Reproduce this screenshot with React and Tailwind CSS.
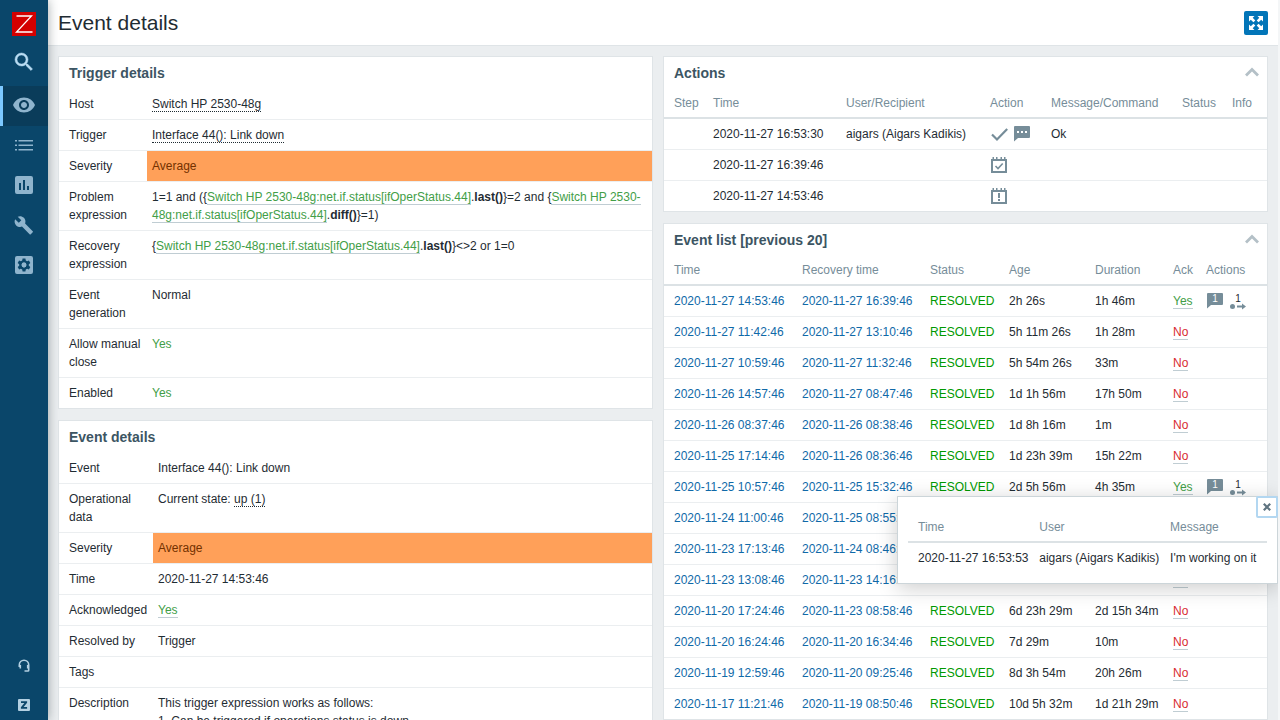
import { useState } from "react";

// =========================
// DATA
// =========================
const NAV_ITEMS = [
    { label: "Monitoring", icon: "eye", active: true },
    { label: "Inventory", icon: "list" },
    { label: "Reports", icon: "chart" },
    { label: "Configuration", icon: "wrench" },
    { label: "Administration", icon: "gear" },
];

const ACTIONS = [
    { time: "2020-11-27 16:53:30", user: "aigars (Aigars Kadikis)", icons: ["check", "comment"], message: "Ok" },
    { time: "2020-11-27 16:39:46", user: "", icons: ["calendarCheck"], message: "" },
    { time: "2020-11-27 14:53:46", user: "", icons: ["calendarAlert"], message: "" },
];

const EVENTS = [
    { time: "2020-11-27 14:53:46", recovery: "2020-11-27 16:39:46", age: "2h 26s", duration: "1h 46m", ack: true },
    { time: "2020-11-27 11:42:46", recovery: "2020-11-27 13:10:46", age: "5h 11m 26s", duration: "1h 28m" },
    { time: "2020-11-27 10:59:46", recovery: "2020-11-27 11:32:46", age: "5h 54m 26s", duration: "33m" },
    { time: "2020-11-26 14:57:46", recovery: "2020-11-27 08:47:46", age: "1d 1h 56m", duration: "17h 50m" },
    { time: "2020-11-26 08:37:46", recovery: "2020-11-26 08:38:46", age: "1d 8h 16m", duration: "1m" },
    { time: "2020-11-25 17:14:46", recovery: "2020-11-26 08:36:46", age: "1d 23h 39m", duration: "15h 22m" },
    { time: "2020-11-25 10:57:46", recovery: "2020-11-25 15:32:46", age: "2d 5h 56m", duration: "4h 35m", ack: true, popup: true },
    { time: "2020-11-24 11:00:46", recovery: "2020-11-25 08:55:46", age: "3d 5h 53m", duration: "21h 55m" },
    { time: "2020-11-23 17:13:46", recovery: "2020-11-24 08:46:46", age: "3d 23h 40m", duration: "15h 33m" },
    { time: "2020-11-23 13:08:46", recovery: "2020-11-23 14:16:46", age: "4d 3h 45m", duration: "1h 8m" },
    { time: "2020-11-20 17:24:46", recovery: "2020-11-23 08:58:46", age: "6d 23h 29m", duration: "2d 15h 34m" },
    { time: "2020-11-20 16:24:46", recovery: "2020-11-20 16:34:46", age: "7d 29m", duration: "10m" },
    { time: "2020-11-19 12:59:46", recovery: "2020-11-20 09:25:46", age: "8d 3h 54m", duration: "20h 26m" },
    { time: "2020-11-17 11:21:46", recovery: "2020-11-19 08:50:46", age: "10d 5h 32m", duration: "1d 21h 29m" },
];

// =========================
// ICONS
// =========================
function NavIcon({ name }) {
    return (
        <svg width="24" height="24" viewBox="0 0 24 24" fill="currentColor" aria-hidden="true">
            {name === "search" && (
                <path
                    d="M15.5 14h-.79l-.28-.27A6.471 6.471 0 0 0 16 9.5 6.5 6.5 0 1 0 9.5 16c1.61 0 3.09-.59 4.23-1.57l.27.28v.79l5 4.99L20.49 19l-4.99-5zm-6 0C7.01 14 5 11.99 5 9.5S7.01 5 9.5 5 14 7.01 14 9.5 11.99 14 9.5 14z"
                    stroke="currentColor"
                    strokeWidth=".5"
                />
            )}
            {name === "eye" && (
                <path d="M12 4.5C7 4.5 2.73 7.61 1 12c1.73 4.39 6 7.5 11 7.5s9.27-3.11 11-7.5c-1.73-4.39-6-7.5-11-7.5zM12 17c-2.76 0-5-2.24-5-5s2.24-5 5-5 5 2.24 5 5-2.24 5-5 5zm0-8c-1.66 0-3 1.34-3 3s1.34 3 3 3 3-1.34 3-3-1.34-3-3-3z" />
            )}
            {name === "list" && (
                <path d="M3 7h2v1.5H3zM6.500 7H21v1.5H6.500zM3 11.500h2V13H3zM6.500 11.500H21V13H6.500zM3 16h2v1.5H3zM6.500 16H21v1.5H6.500z" />
            )}
            {name === "chart" && (
                <path d="M19 3H5a2 2 0 0 0-2 2v14a2 2 0 0 0 2 2h14a2 2 0 0 0 2-2V5a2 2 0 0 0-2-2zM9 17H7v-7h2v7zm4 0h-2V7h2v10zm4 0h-2v-4h2v4z" />
            )}
            {name === "wrench" && (
                <path d="M20.7 18.2l-7.6-7.6c.8-1.9.3-4.2-1.2-5.8-1.7-1.7-4.2-2-6.2-1.100l3.600 3.500-2.500 2.500-3.700-3.500c-1 2.100-.5 4.600 1.100 6.200 1.600 1.500 3.900 2 5.800 1.200l7.600 7.600c.3.3.8.3 1.200 0l1.900-1.900c.4-.3.4-.9 0-1.100z" />
            )}
            {name === "gear" && (
                <>
                    <path
                        fillRule="evenodd"
                        d="M5 3h14a2 2 0 0 1 2 2v14a2 2 0 0 1-2 2H5a2 2 0 0 1-2-2V5a2 2 0 0 1 2-2zM10.600 5.500L10.200 7.400 8.900 8.200 7.100 7.500 5.700 10 7.200 11.200V12.800L5.700 14 7.100 16.500 8.900 15.800 10.200 16.600 10.600 18.500H13.400L13.800 16.600 15.100 15.800 16.900 16.500 18.300 14 16.800 12.800V11.200L18.300 10 16.900 7.500 15.100 8.200 13.800 7.400 13.400 5.500zM12 9.600a2.400 2.400 0 1 0 0 4.800 2.400 2.400 0 0 0 0-4.800z"
                        clipRule="evenodd"
                    />
                    <circle cx="12" cy="12" r="2.4" className="fill-[#8fb4cd]" />
                </>
            )}
            {name === "headset" && (
                <path
                    d="M7.300 14V12a4.700 4.700 0 0 1 9.400 0v5.200a.800.800 0 0 1-.800.800H12.500M8.300 12v3.500M15.700 12v3.500"
                    fill="none"
                    stroke="currentColor"
                    strokeWidth="1.6"
                />
            )}
            {name === "share" && (
                <path fillRule="evenodd" d="M7 6h10a1 1 0 0 1 1 1v10a1 1 0 0 1-1 1H7a1 1 0 0 1-1-1V7a1 1 0 0 1 1-1zm2 2.200v1.900h3.400L8.900 14.300v1.500h6.200v-1.900h-3.500l3.500-4.200V8.200z" />
            )}
        </svg>
    );
}

function ActionIcon({ name }) {
    return (
        <svg width="18" height="18" viewBox="0 0 18 18" fill="currentColor" aria-hidden="true">
            {name === "check" && (
                <path d="M2 9.500l5 5L17.200 4" fill="none" stroke="currentColor" strokeWidth="2.2" />
            )}
            {name === "comment" && (
                <path fillRule="evenodd" d="M2 1h14a1 1 0 0 1 1 1v10a1 1 0 0 1-1 1H5l-4 3.500V2a1 1 0 0 1 1-1zm2 5v2h2V6zm4 0v2h2V6zm4 0v2h2V6z" />
            )}
            {(name === "calendarCheck" || name === "calendarAlert") && (
                <path
                    fillRule="evenodd"
                    d="M1 3h1.500V1H4v2h2V1h1.500v2h3V1H12v2h2V1h1.500v2H17v14H1zm2 2v10h12V5z"
                />
            )}
            {name === "calendarCheck" && (
                <path d="M5.500 10l2.500 2.500L12.700 7.500" fill="none" stroke="currentColor" strokeWidth="1.6" />
            )}
            {name === "calendarAlert" && <path d="M8 6h2v5H8zM8 12h2v2H8z" />}
        </svg>
    );
}

function MessageCountIcon() {
    return (
        <svg width="18" height="18" viewBox="0 0 18 18" aria-hidden="true">
            <path d="M2 1h14a1 1 0 0 1 1 1v10a1 1 0 0 1-1 1H5l-4 3.500V2a1 1 0 0 1 1-1z" fill="#768d99" />
            <text x="9" y="10" textAnchor="middle" fontSize="10" fill="#fff">1</text>
        </svg>
    );
}

function ActionCountIcon() {
    return (
        <svg width="18" height="18" viewBox="0 0 18 18" aria-hidden="true">
            <text x="9" y="10" textAnchor="middle" fontSize="10" fill="#1f2c33">1</text>
            <circle cx="3.5" cy="14.5" r="2.5" fill="#768d99" />
            <path d="M8 13.500h5V11.500l4 3-4 3v-2H8z" fill="#768d99" />
        </svg>
    );
}

// =========================
// SHARED PIECES
// =========================
function Panel({ title, collapsible, children }) {
    return (
        <section className="bg-white border border-[#dfe4e7]">
            <div className="h-8 px-2.5 flex items-center justify-between">
                <h2 className="text-sm font-bold text-[#3c5563]">{title}</h2>
                {collapsible && (
                    <button aria-label={`Collapse ${title}`} className="w-3.5 h-5 -mr-0.5 mb-1 text-[#b4c0c7]">
                        <svg width="14" height="20" viewBox="0 0 14 20" fill="none" stroke="currentColor" strokeWidth="2.8">
                            <path d="M1 14.500l6-6 6 6" />
                        </svg>
                    </button>
                )}
            </div>
            {children}
        </section>
    );
}

function DetailRow({ label, severity, children }) {
    return (
        <tr className="border-b border-[#ebeef0] last:border-b-0">
            <th scope="row" className="py-1.5 pl-2.5 pr-0 text-left font-normal align-top">{label}</th>
            <td className={severity ? "py-1.5 px-[5px] align-top bg-[#ffa059] text-[#733100]" : "py-1.5 px-[5px] align-top"}>
                {children}
            </td>
        </tr>
    );
}

function ItemLink({ children }) {
    return <a href="#item" className="text-[#429e47] border-b border-[#c0cdd3]">{children}</a>;
}

function HintLink({ children }) {
    return <a href="#menu" className="border-b border-dotted border-[#1f2c33]">{children}</a>;
}

function Th({ children }) {
    return (
        <th scope="col" className="py-[5px] px-[5px] first:pl-2.5 last:pr-2.5 text-left font-normal text-[#768d99] whitespace-nowrap">
            {children}
        </th>
    );
}

function Td({ children }) {
    return <td className="py-1.5 px-[5px] first:pl-2.5 last:pr-2.5 whitespace-nowrap">{children}</td>;
}

// =========================
// SIDEBAR
// =========================
function Sidebar() {
    return (
        <aside className="w-12 shrink-0 z-20 flex flex-col bg-[#0a466a] text-[#8fb4cd] shadow-[0_0_10px_rgba(31,44,51,0.4)]">
            <a href="#home" aria-label="Zabbix" className="mt-3 mx-3 size-6 bg-[#d40000]">
                <svg width="24" height="24" viewBox="0 0 24 24" fill="none" stroke="#fff" strokeWidth="1.3">
                    <path d="M4.500 4H19.500L4.500 20H20.500" />
                </svg>
            </a>
            <button aria-label="Search" className="mt-1.5 mb-1 h-10 flex items-center justify-center text-[#b9dcf3]">
                <NavIcon name="search" />
            </button>
            <nav className="flex flex-col">
                {NAV_ITEMS.map((item) => (
                    <a
                        key={item.label}
                        href="#nav"
                        aria-label={item.label}
                        className={
                            item.active
                                ? "h-10 pr-[3px] pb-0.5 flex items-center justify-center bg-[#0a3c5a] border-l-3 border-[#7cc8ff]"
                                : "h-10 pb-0.5 flex items-center justify-center"
                        }
                    >
                        <NavIcon name={item.icon} />
                    </a>
                ))}
            </nav>
            <div className="mt-auto -mb-[5px] flex flex-col text-[#b3d0e2]">
                <a href="#support" aria-label="Support" className="h-10 flex items-center justify-center">
                    <NavIcon name="headset" />
                </a>
                <a href="#share" aria-label="Share" className="h-10 flex items-center justify-center">
                    <NavIcon name="share" />
                </a>
            </div>
        </aside>
    );
}

// =========================
// LEFT COLUMN
// =========================
function TriggerDetails() {
    return (
        <Panel title="Trigger details">
            <table className="w-full table-fixed">
                <colgroup>
                    <col className="w-[88px]" />
                    <col />
                </colgroup>
                <tbody>
                    <DetailRow label="Host"><HintLink>Switch HP 2530-48g</HintLink></DetailRow>
                    <DetailRow label="Trigger"><HintLink>Interface 44(): Link down</HintLink></DetailRow>
                    <DetailRow label="Severity" severity>Average</DetailRow>
                    <DetailRow label="Problem expression">
                        1=1 and ({"{"}<ItemLink>Switch HP 2530-48g:net.if.status[ifOperStatus.44]</ItemLink>.<b>last()</b>{"}"}=2
                        and {"{"}<ItemLink>Switch HP 2530-48g:net.if.status[ifOperStatus.44]</ItemLink>.<b>diff()</b>{"}"}=1)
                    </DetailRow>
                    <DetailRow label="Recovery expression">
                        {"{"}<ItemLink>Switch HP 2530-48g:net.if.status[ifOperStatus.44]</ItemLink>.<b>last()</b>{"}<>2 or 1=0"}
                    </DetailRow>
                    <DetailRow label="Event generation">Normal</DetailRow>
                    <DetailRow label="Allow manual close"><span className="text-[#429e47]">Yes</span></DetailRow>
                    <DetailRow label="Enabled"><span className="text-[#429e47]">Yes</span></DetailRow>
                </tbody>
            </table>
        </Panel>
    );
}

function EventDetails() {
    return (
        <Panel title="Event details">
            <table className="w-full table-fixed">
                <colgroup>
                    <col className="w-[94px]" />
                    <col />
                </colgroup>
                <tbody>
                    <DetailRow label="Event">Interface 44(): Link down</DetailRow>
                    <DetailRow label="Operational data">Current state: <HintLink>up (1)</HintLink></DetailRow>
                    <DetailRow label="Severity" severity>Average</DetailRow>
                    <DetailRow label="Time">2020-11-27 14:53:46</DetailRow>
                    <DetailRow label="Acknowledged"><ItemLink>Yes</ItemLink></DetailRow>
                    <DetailRow label="Resolved by">Trigger</DetailRow>
                    <DetailRow label="Tags" />
                    <DetailRow label="Description">
                        This trigger expression works as follows:<br />
                        1. Can be triggered if operations status is down.
                    </DetailRow>
                </tbody>
            </table>
        </Panel>
    );
}

// =========================
// RIGHT COLUMN
// =========================
function ActionsPanel() {
    return (
        <Panel title="Actions" collapsible>
            <table className="w-full table-fixed">
                <colgroup>
                    <col className="w-[44px]" />
                    <col className="w-[133px]" />
                    <col className="w-36" />
                    <col className="w-[61px]" />
                    <col className="w-[131px]" />
                    <col className="w-[50px]" />
                    <col />
                </colgroup>
                <thead>
                    <tr className="border-b-2 border-[#dce2e5]">
                        <Th>Step</Th>
                        <Th>Time</Th>
                        <Th>User/Recipient</Th>
                        <Th>Action</Th>
                        <Th>Message/Command</Th>
                        <Th>Status</Th>
                        <Th>Info</Th>
                    </tr>
                </thead>
                <tbody>
                    {ACTIONS.map((row) => (
                        <tr key={row.time} className="border-b border-[#ebeef0] last:border-b-0">
                            <Td />
                            <Td>{row.time}</Td>
                            <Td>{row.user}</Td>
                            <Td>
                                <div className="flex gap-[5px] text-[#768d99]">
                                    {row.icons.map((icon) => (
                                        <ActionIcon key={icon} name={icon} />
                                    ))}
                                </div>
                            </Td>
                            <Td>{row.message}</Td>
                            <Td />
                            <Td />
                        </tr>
                    ))}
                </tbody>
            </table>
        </Panel>
    );
}

function MessagePopup({ onClose }) {
    return (
        <div className="absolute z-10 top-6 -right-[11px] w-[381px] px-2.5 pt-4 pb-2.5 bg-white border border-[#ccd5d9] shadow-[0_4px_20px_rgba(0,0,0,0.2)]">
            <button
                aria-label="Close"
                onClick={onClose}
                className="absolute -top-px -right-px size-[22px] flex items-center justify-center rounded-xs bg-white text-[#5f7480] border-2 border-[#b3d7f1]"
            >
                <svg width="8" height="8" viewBox="0 0 8 8" fill="none" stroke="currentColor" strokeWidth="2.2">
                    <path d="M.8.8l6.400 6.400M7.200.8L.8 7.200" />
                </svg>
            </button>
            <table className="w-full">
                <thead>
                    <tr className="border-b-2 border-[#dce2e5]">
                        <Th>Time</Th>
                        <Th>User</Th>
                        <Th>Message</Th>
                    </tr>
                </thead>
                <tbody>
                    <tr>
                        <Td>2020-11-27 16:53:53</Td>
                        <Td>aigars (Aigars Kadikis)</Td>
                        <Td>I'm working on it</Td>
                    </tr>
                </tbody>
            </table>
        </div>
    );
}

function EventList() {
    const [isPopupOpen, setIsPopupOpen] = useState(true);

    return (
        <Panel title="Event list [previous 20]" collapsible>
            <table className="w-full table-fixed">
                <colgroup>
                    <col className="w-[133px]" />
                    <col className="w-32" />
                    <col className="w-[79px]" />
                    <col className="w-[86px]" />
                    <col className="w-[78px]" />
                    <col className="w-[33px]" />
                    <col />
                </colgroup>
                <thead>
                    <tr className="border-b-2 border-[#dce2e5]">
                        <Th>Time</Th>
                        <Th>Recovery time</Th>
                        <Th>Status</Th>
                        <Th>Age</Th>
                        <Th>Duration</Th>
                        <Th>Ack</Th>
                        <Th>Actions</Th>
                    </tr>
                </thead>
                <tbody>
                    {EVENTS.map((event) => (
                        <tr key={event.time} className="border-b border-[#ebeef0] last:border-b-0">
                            <Td><a href="#event" className="text-[#0f69a8]">{event.time}</a></Td>
                            <Td><a href="#event" className="text-[#0f69a8]">{event.recovery}</a></Td>
                            <Td><span className="text-[#009900]">RESOLVED</span></Td>
                            <Td>{event.age}</Td>
                            <Td>{event.duration}</Td>
                            <Td>
                                <a
                                    href="#ack"
                                    className={
                                        event.ack
                                            ? "text-[#429e47] border-b border-[#c0cdd3]"
                                            : "text-[#d92b32] border-b border-[#c0cdd3]"
                                    }
                                >
                                    {event.ack ? "Yes" : "No"}
                                </a>
                            </Td>
                            <td className="relative py-1.5 px-[5px]">
                                {event.ack && (
                                    <div className="flex gap-[5px]">
                                        <button aria-label="Messages" onClick={() => setIsPopupOpen(true)}>
                                            <MessageCountIcon />
                                        </button>
                                        <button aria-label="Action log">
                                            <ActionCountIcon />
                                        </button>
                                    </div>
                                )}
                                {event.popup && isPopupOpen && (
                                    <MessagePopup onClose={() => setIsPopupOpen(false)} />
                                )}
                            </td>
                        </tr>
                    ))}
                </tbody>
            </table>
        </Panel>
    );
}

function App() {
    return (
        <div className="h-screen flex overflow-hidden bg-[#ebeef0] font-['Liberation_Sans',Arial,sans-serif] text-xs leading-[18px] text-[#1f2c33]">
            <Sidebar />

            <main className="flex-1 min-w-0 overflow-y-auto [scrollbar-width:none] border-r-2 border-[#f4f6f7]">
                {/* ================= HEADER ================= */}
                <header className="h-[46px] px-2.5 flex items-center justify-between bg-white border-b border-[#dfe4e7]">
                    <h1 className="text-[21px] leading-6">Event details</h1>
                    <button aria-label="Kiosk mode" className="size-6 rounded-xs bg-[#0275b8] text-white">
                        <svg width="24" height="24" viewBox="0 0 24 24" fill="currentColor">
                            <path d="M5 5h5.500L8.700 6.800l2.600 2.600-1.900 1.900-2.600-2.600L5 10.500zM19 5v5.500l-1.800-1.800-2.600 2.600-1.900-1.900 2.600-2.600L13.500 5zM5 19v-5.500l1.800 1.800 2.600-2.600 1.900 1.900-2.600 2.600L10.500 19zM19 19h-5.500l1.800-1.800-2.600-2.600 1.900-1.900 2.600 2.600 1.800-1.800z" />
                        </svg>
                    </button>
                </header>

                {/* ================= CONTENT ================= */}
                <div className="p-2.5 grid grid-cols-[595fr_605fr] gap-2.5 items-start">
                    <div className="min-w-0 flex flex-col gap-[11px]">
                        <TriggerDetails />
                        <EventDetails />
                    </div>
                    <div className="min-w-0 flex flex-col gap-[11px]">
                        <ActionsPanel />
                        <EventList />
                    </div>
                </div>
            </main>
        </div>
    );
}

export default App;
